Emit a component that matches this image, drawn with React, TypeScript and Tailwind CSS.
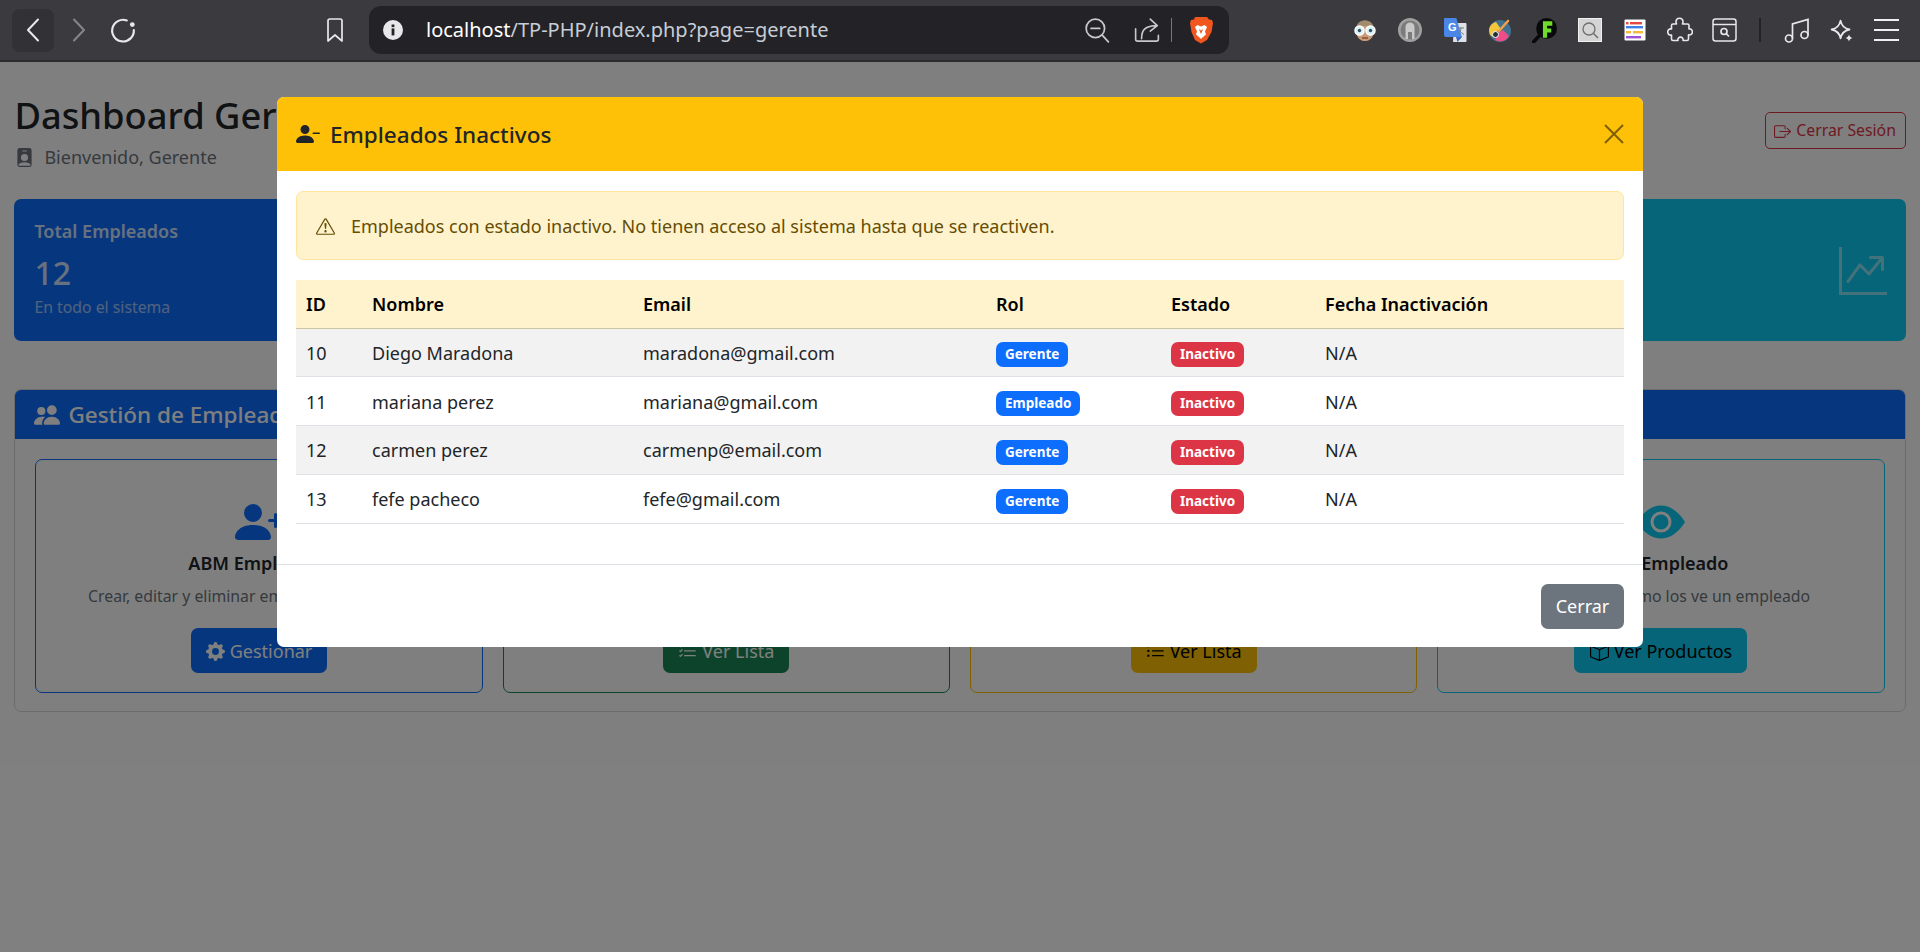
import type { ReactNode } from "react";
import {
  BsBox,
  BsBoxArrowRight,
  BsExclamationTriangle,
  BsEyeFill,
  BsGearFill,
  BsGraphUpArrow,
  BsListCheck,
  BsListUl,
  BsPeopleFill,
  BsPersonBadgeFill,
  BsPersonDashFill,
  BsPersonPlusFill,
} from "react-icons/bs";

const empleados = [
  { id: 10, nombre: "Diego Maradona", email: "maradona@gmail.com", rol: "Gerente" },
  { id: 11, nombre: "mariana perez", email: "mariana@gmail.com", rol: "Empleado" },
  { id: 12, nombre: "carmen perez", email: "carmenp@email.com", rol: "Gerente" },
  { id: 13, nombre: "fefe pacheco", email: "fefe@gmail.com", rol: "Gerente" },
];

function Slot({ children }: { children: ReactNode }) {
  return <div className="flex w-[45px] shrink-0 items-center justify-center">{children}</div>;
}

function BrowserBar() {
  const line = { stroke: "#e8e8ea", strokeWidth: 1.7, strokeLinecap: "round" as const, strokeLinejoin: "round" as const };
  return (
    <div className="flex h-[62px] shrink-0 items-center border-b-2 border-[#2b2b2f] bg-[#3a3a3f] pl-3">
      <div className="flex h-[43px] w-[42px] items-center justify-center rounded-lg bg-[#323236]">
        <svg viewBox="0 0 14 24" className="h-[24px] w-[14px]" fill="none">
          <path d="M12 1.500 2 12l10 10.500" {...line} strokeWidth={2} />
        </svg>
      </div>
      <svg viewBox="0 0 14 24" className="ml-[18px] h-[24px] w-[14px]" fill="none">
        <path d="m2 1.500 10 10.500L2 22.500" stroke="#85858a" strokeWidth={2} strokeLinecap="round" strokeLinejoin="round" />
      </svg>
      <svg viewBox="0 0 24 24" className="ml-[24px] h-[26px] w-[26px]" fill="none">
        <path d="M15.500 3.200A10 10 0 1 0 22 12" {...line} strokeWidth={2} />
        <circle cx="20.600" cy="7" r="2.200" fill="#e8e8ea" />
      </svg>
      <svg viewBox="0 0 18 25" className="ml-[190px] h-[25px] w-[18px]" fill="none">
        <path d="M2 2.800C2 1.800 2.800 1 3.800 1h10.400c1 0 1.800.8 1.800 1.800V23l-7-6-7 6Z" {...line} />
      </svg>
      <div className="ml-[25px] flex h-[48px] w-[860px] items-center rounded-xl bg-[#232327] pl-[14px] pr-[16px]">
        <svg viewBox="0 0 20 20" className="h-[20px] w-[20px]">
          <circle cx="10" cy="10" r="10" fill="#e8e8ea" />
          <rect x="8.600" y="8.400" width="2.800" height="7" fill="#232327" />
          <rect x="8.600" y="4.500" width="2.800" height="2.600" fill="#232327" />
        </svg>
        <div className="ml-[23px] text-[20px] leading-none text-[#c7cdd6]">
          <span className="text-white">localhost</span>/TP-PHP/index.php?page=gerente
        </div>
        <svg viewBox="0 0 24 24" className="ml-auto h-[26px] w-[26px]" fill="none">
          <circle cx="10.500" cy="10.500" r="8.500" stroke="#c8c8cc" strokeWidth={1.600} />
          <path d="M6.500 10.500h8M17 17l5.500 6" stroke="#c8c8cc" strokeWidth={1.600} strokeLinecap="round" />
        </svg>
        <svg viewBox="0 0 24 24" className="ml-[24px] h-[28px] w-[26px]" fill="none">
          <path d="M1.500 11v9.500c0 1 .8 1.800 1.800 1.800h17.400c1 0 1.800-.8 1.800-1.800V17M7 20c0-8 3-11.500 13-12M15 2l6.500 6-6.500 5" stroke="#c8c8cc" strokeWidth={1.500} strokeLinecap="round" strokeLinejoin="round" />
        </svg>
        <div className="ml-[11px] h-[24px] w-px bg-[#77777c]" />
        <svg viewBox="0 0 24 28" className="ml-[17px] h-[28px] w-[24px]">
          <path d="M6 1h12l2 2.500 3 .5 1 3-1.500 9L18 24l-6 3.500L6 24l-3.500-8L1 7l1-3 3-.5Z" fill="#f1561f" />
          <path d="M8.500 9 12 10.500 15.500 9l2.500 2-2 4.500 1 3-3 2.500-2 2-2-2-3-2.500 1-3L6 11Z" fill="#fff" />
          <path d="M10 13.500h1.200L12 15l.8-1.500H14L12 18Z" fill="#f1561f" />
        </svg>
      </div>

      <div className="ml-[113px] flex items-center">
        <Slot>
          <svg viewBox="0 0 24 24" className="h-[24px] w-[24px]">
            <path d="M4 11C3 0 21 0 20 11v6c-2 8-14 8-16 0Z" fill="#c99b78" />
            <path d="M3.500 10C3 0 21 0 20.500 10c-5-3-12-3-17 0Z" fill="#a08b6f" />
            <circle cx="6.500" cy="12.500" r="4.500" fill="#d7f2f5" stroke="#fff" strokeWidth={1.500} />
            <circle cx="17.500" cy="12.500" r="4.500" fill="#d7f2f5" stroke="#fff" strokeWidth={1.500} />
            <circle cx="6.500" cy="12.500" r="1.700" fill="#35505a" />
            <circle cx="17.500" cy="12.500" r="1.700" fill="#35505a" />
            <path d="M9 20h6" stroke="#8a4b35" strokeWidth={1.500} />
          </svg>
        </Slot>
        <Slot>
          <svg viewBox="0 0 24 24" className="h-[24px] w-[24px]">
            <circle cx="12" cy="12" r="12" fill="#a0a0a0" />
            <circle cx="12" cy="12" r="9.500" fill="#7b7b7b" />
            <path d="M7.500 21V9c0-6 9-6 9 0v12h-2.500V14h-4v7Z" fill="#c8c8c8" />
          </svg>
        </Slot>
        <Slot>
          <svg viewBox="0 0 24 24" className="h-[24px] w-[24px]">
            <path d="M11 5h11.500c.5 0 1 .5 1 1v17c0 .5-.5 1-1 1H10Z" fill="#dfe3e8" />
            <path d="M1.500 0h11.800L19 19H3c-1 0-2-1-2-2V1Z" fill="#4a86e8" />
            <path d="m13 19 1.500 5 4.500-5Z" fill="#3367c8" />
            <text x="5" y="13" fontSize="11" fontWeight="700" fill="#fff" fontFamily="'Liberation Sans', sans-serif">G</text>
            <path d="M15 10h6M18 9v1c0 3-2 5-3.500 6M16.500 12c1 2 3 3.500 4.500 4.500" stroke="#7a7f87" strokeWidth={1} fill="none" />
          </svg>
        </Slot>
        <Slot>
          <svg viewBox="0 0 24 24" className="h-[24px] w-[24px]" fill="none">
            <circle cx="12" cy="13" r="11" fill="#41718c" />
            <path d="M1 13C1 8 4 5 8 4l5 7-6 3-2 5-3-2Z" fill="#f4c63c" />
            <path d="M7 22l3-7 5-3 6 6c-3 5-9 7-14 4Z" fill="#ee4d87" />
            <path d="m11 13 9-10" stroke="#f0a04a" strokeWidth={2.600} strokeLinecap="round" />
            <circle cx="7.500" cy="16.500" r="3" fill="#20313c" stroke="#fff" strokeWidth={1} />
          </svg>
        </Slot>
        <Slot>
          <svg viewBox="0 0 24 24" className="h-[25px] w-[25px]" fill="none">
            <circle cx="14" cy="10" r="10" fill="#08090a" />
            <path d="m7 17-5.500 6" stroke="#08090a" strokeWidth={3.500} strokeLinecap="round" />
            <path d="M10.500 3h9v4.500h-5v2.500h4v4h-4v5h-4Z" fill="#6fdb2d" />
          </svg>
        </Slot>
        <Slot>
          <svg viewBox="0 0 24 24" className="h-[24px] w-[24px]" fill="none">
            <rect x="0.500" y="0.500" width="23" height="23" fill="#d4d4d4" stroke="#f1f1f1" />
            <circle cx="11" cy="11" r="6" stroke="#6f6f6f" strokeWidth={1.300} />
            <path d="m15.500 15.500 4.500 4.500" stroke="#6f6f6f" strokeWidth={1.500} />
          </svg>
        </Slot>
        <Slot>
          <svg viewBox="0 0 22 24" className="h-[24px] w-[22px]">
            <rect x="0.500" y="1.500" width="21" height="21" rx="1" fill="#fff" />
            <rect x="6" y="4" width="12" height="2.400" fill="#e4483f" />
            <rect x="2" y="4" width="2.500" height="2.400" fill="#e4483f" />
            <rect x="2" y="8" width="17" height="2.400" fill="#3f80e8" />
            <rect x="2" y="13" width="5" height="2.400" fill="#f2b93b" />
            <rect x="9" y="13" width="10" height="2.400" fill="#f2b93b" />
            <rect x="2" y="18" width="15" height="2.400" fill="#9d52d6" />
          </svg>
        </Slot>
        <Slot>
          <svg viewBox="0 0 26 26" className="h-[26px] w-[26px]" fill="none">
            <path d="M9 5c0-5 7-5 7 0 0 1-.5 1.500-.5 2h5c1 0 1.500.5 1.500 1.500v3.500c4-1 5 6 0 6l-.5-.2v4.200c0 1-.5 1.500-1.500 1.500h-4c1-4.500-6-4.500-5 0H6c-1 0-1.500-.5-1.500-1.500v-4c-5 1-5-7 0-6V8.500C4.500 7.500 5 7 6 7h3.500C9.500 6.500 9 6 9 5Z" stroke="#e8e8ea" strokeWidth={1.600} strokeLinejoin="round" />
          </svg>
        </Slot>
        <Slot>
          <svg viewBox="0 0 25 24" className="h-[24px] w-[25px]" fill="none">
            <rect x="1" y="1" width="23" height="22" rx="2.500" stroke="#e8e8ea" strokeWidth={1.500} />
            <path d="M1 6.500h23" stroke="#e8e8ea" strokeWidth={1.500} />
            <circle cx="12" cy="13.500" r="3" stroke="#e8e8ea" strokeWidth={1.700} />
            <path d="m14.500 16 2.500 2.500" stroke="#e8e8ea" strokeWidth={1.700} />
          </svg>
        </Slot>
        <div className="ml-[12px] h-[24px] w-[2px] bg-[#232327]" />
        <div className="ml-[13px] flex">
          <Slot>
            <svg viewBox="0 0 26 26" className="h-[26px] w-[26px]" fill="none">
              <circle cx="5" cy="21.500" r="3.500" stroke="#e8e8ea" strokeWidth={1.700} />
              <circle cx="20.500" cy="18" r="3.500" stroke="#e8e8ea" strokeWidth={1.700} />
              <path d="M8.500 21.500V7L24 2.500V18" stroke="#e8e8ea" strokeWidth={1.700} />
            </svg>
          </Slot>
          <Slot>
            <svg viewBox="0 0 26 26" className="h-[26px] w-[26px]" fill="none">
              <path d="M11 1.500c1 5 3.500 7.500 8.500 8.500-5 1-7.500 3.500-8.500 8.500-1-5-3.500-7.500-8.500-8.500 5-1 7.500-3.500 8.500-8.500Z" stroke="#e8e8ea" strokeWidth={1.700} strokeLinejoin="round" transform="translate(0 2) scale(1.050)" />
              <path d="M20 17.500c.5 2 1.500 3 3.500 3.500-2 .5-3 1.500-3.500 3.500-.5-2-1.500-3-3.500-3.500 2-.5 3-1.500 3.500-3.500Z" fill="#e8e8ea" />
            </svg>
          </Slot>
          <Slot>
            <div className="flex w-[25px] flex-col gap-[8px]">
              <div className="h-[2px] bg-[#f0f0f2]" />
              <div className="h-[2px] bg-[#f0f0f2]" />
              <div className="h-[2px] bg-[#f0f0f2]" />
            </div>
          </Slot>
        </div>
      </div>
    </div>
  );
}

function StatCard({ className, children }: { className: string; children?: ReactNode }) {
  return <div className={`flex h-[142px] items-start justify-between rounded-[7px] p-[19px] pl-[20px] text-white ${className}`}>{children}</div>;
}

function ModuleCard({
  border,
  icon,
  title,
  text,
  button,
}: {
  border: string;
  icon: ReactNode;
  title: string;
  text: string;
  button: ReactNode;
}) {
  return (
    <div className={`flex h-[234px] flex-col items-center rounded-[7px] border pt-[38px] ${border}`}>
      <div className="h-[40px] text-[48px] leading-none">{icon}</div>
      <div className="mt-[11px] text-[18px] font-semibold leading-[29px] text-[#212529]">{title}</div>
      <div className="mt-[6px] text-[15.8px] leading-[25px] text-[#6c757d]">{text}</div>
      <div className="mt-[19px]">{button}</div>
    </div>
  );
}

function Dashboard() {
  return (
    <div className="px-[14.4px] pt-[30px] text-[#212529]">
      <div className="flex items-start justify-between">
        <div>
          <div className="text-[36.3px] font-medium leading-[46px]">Dashboard Gerente</div>
          <div className="mt-[5px] flex items-center gap-[10px] text-[18px] leading-[29px] text-[#6c757d]">
            <BsPersonBadgeFill className="ml-[1px] h-[19px] w-[19px]" />
            Bienvenido, Gerente
          </div>
        </div>
        <button className="mt-[20px] flex h-[37px] w-[141px] items-center justify-center gap-[5px] rounded-[5px] border border-[#dc3545] pt-[1px] text-[15.8px] text-[#dc3545]">
          <BsBoxArrowRight className="h-[17px] w-[17px]" />
          Cerrar Sesión
        </button>
      </div>

      <div className="mt-[27px] grid grid-cols-4 gap-[20px]">
        <StatCard className="bg-[#0d6efd]">
          <div>
            <div className="text-[18px] font-semibold leading-[26px] opacity-80">Total Empleados</div>
            <div className="mt-[9px] text-[32px] font-medium leading-[40px] opacity-80">12</div>
            <div className="mt-[2px] text-[15.8px] leading-[25px] opacity-60">En todo el sistema</div>
          </div>
        </StatCard>
        <StatCard className="bg-[#198754]" />
        <StatCard className="bg-[#ffc107]" />
        <StatCard className="justify-end bg-[#0dcaf0]">
          <BsGraphUpArrow className="mt-[29px] h-[48px] w-[48px] opacity-50" />
        </StatCard>
      </div>

      <div className="mt-[48px] h-[323px] overflow-hidden rounded-[7px] border border-[#d9d9d9]">
        <div className="flex h-[49px] items-center gap-[8px] bg-[#0d6efd] px-[19px] pt-[1px] text-[22.5px] font-medium text-white">
          <BsPeopleFill className="h-[26px] w-[26px]" />
          Gestión de Empleados
        </div>
        <div className="grid grid-cols-4 gap-[20px] p-[20px]">
          <ModuleCard
            border="border-[#0d6efd]"
            icon={<BsPersonPlusFill className="text-[#0d6efd]" />}
            title="ABM Empleados"
            text="Crear, editar y eliminar empleados del sistema"
            button={
              <button className="flex h-[45px] w-[136px] items-center justify-center gap-[5px] rounded-[7px] bg-[#0d6efd] pt-[1px] text-[18px] text-white">
                <BsGearFill className="h-[19px] w-[19px]" />
                Gestionar
              </button>
            }
          />
          <ModuleCard
            border="border-[#198754]"
            icon={<BsListCheck className="text-[#198754]" />}
            title="Empleados Activos"
            text="Lista de empleados activos"
            button={
              <button className="flex h-[45px] w-[126px] items-center justify-center gap-[5px] rounded-[7px] bg-[#198754] pt-[1px] text-[18px] text-white">
                <BsListCheck className="h-[19px] w-[19px]" />
                Ver Lista
              </button>
            }
          />
          <ModuleCard
            border="border-[#ffc107]"
            icon={<BsPersonDashFill className="text-[#ffc107]" />}
            title="Empleados Inactivos"
            text="Lista de empleados inactivos"
            button={
              <button className="flex h-[45px] w-[126px] items-center justify-center gap-[5px] rounded-[7px] bg-[#ffc107] pt-[1px] text-[18px] text-black">
                <BsListUl className="h-[19px] w-[19px]" />
                Ver Lista
              </button>
            }
          />
          <ModuleCard
            border="border-[#0dcaf0]"
            icon={<BsEyeFill className="text-[#0dcaf0]" />}
            title="Vista Empleado"
            text="Ver productos como los ve un empleado"
            button={
              <button className="flex h-[45px] w-[173px] items-center justify-center gap-[5px] rounded-[7px] bg-[#0dcaf0] pt-[1px] text-[18px] text-black">
                <BsBox className="h-[19px] w-[19px]" />
                Ver Productos
              </button>
            }
          />
        </div>
      </div>
    </div>
  );
}

function Modal() {
  return (
    <div className="absolute inset-0 flex justify-center bg-black/50 pt-[35px]">
      <div className="h-[550px] w-[1366px] overflow-hidden rounded-[7px] bg-white text-[18px] text-[#212529]">
        <div className="flex h-[74px] items-center bg-[#ffc107] pl-[19px] pr-[19px]">
          <BsPersonDashFill className="h-[24px] w-[24px]" />
          <div className="ml-[10px] pt-[2px] text-[22.5px] font-medium">Empleados Inactivos</div>
          <svg viewBox="0 0 20 20" className="ml-auto h-[20px] w-[20px] opacity-50" fill="none">
            <path d="M1 1l18 18M19 1 1 19" stroke="#000" strokeWidth={2} />
          </svg>
        </div>
        <div className="px-[19px] pt-[20px]">
          <div className="flex h-[69px] items-center rounded-[7px] border border-[#ffe69c] bg-[#fff3cd] pl-[19px] pt-[1px] text-[#664d03]">
            <BsExclamationTriangle className="h-[19px] w-[19px]" />
            <span className="ml-[16px]">Empleados con estado inactivo. No tienen acceso al sistema hasta que se reactiven.</span>
          </div>
          <table className="mt-[20px] w-full table-fixed text-left">
            <thead>
              <tr className="h-[48px] border-b border-[#cdc4a4] bg-[#fff3cd] text-black">
                <th className="w-[66px] pl-[10px] pt-[1px] font-semibold">ID</th>
                <th className="w-[271px] pl-[10px] pt-[1px] font-semibold">Nombre</th>
                <th className="w-[353px] pl-[10px] pt-[1px] font-semibold">Email</th>
                <th className="w-[175px] pl-[10px] pt-[1px] font-semibold">Rol</th>
                <th className="w-[154px] pl-[10px] pt-[1px] font-semibold">Estado</th>
                <th className="pl-[10px] pt-[1px] font-semibold">Fecha Inactivación</th>
              </tr>
            </thead>
            <tbody>
              {empleados.map((emp, i) => (
                <tr key={emp.id} className={`h-[48.75px] border-b border-[#dee2e6] ${i % 2 === 0 ? "bg-[#f2f2f2]" : "bg-white"}`}>
                  <td className="pl-[10px] pt-[2px]">{emp.id}</td>
                  <td className="pl-[10px] pt-[2px]">{emp.nombre}</td>
                  <td className="pl-[10px] pt-[2px]">{emp.email}</td>
                  <td className="pl-[10px] pt-[2px]">
                    <span className="inline-block rounded-[7px] bg-[#0d6efd] px-[9px] text-[13.5px] font-bold leading-[25px] text-white">{emp.rol}</span>
                  </td>
                  <td className="pl-[10px] pt-[2px]">
                    <span className="inline-block rounded-[7px] bg-[#dc3545] px-[9px] text-[13.5px] font-bold leading-[25px] text-white">Inactivo</span>
                  </td>
                  <td className="pl-[10px] pt-[2px]">N/A</td>
                </tr>
              ))}
            </tbody>
          </table>
        </div>
        <div className="mt-[40px] flex justify-end border-t border-[#dee2e6] px-[19px] pt-[19px]">
          <button className="h-[45px] w-[83px] rounded-[7px] bg-[#6c757d] text-white">Cerrar</button>
        </div>
      </div>
    </div>
  );
}

export default function App() {
  return (
    <div className="flex h-[952px] flex-col overflow-hidden bg-white font-['Noto_Sans',sans-serif]">
      <BrowserBar />
      <div className="relative flex-1">
        <Dashboard />
        <Modal />
      </div>
    </div>
  );
}
